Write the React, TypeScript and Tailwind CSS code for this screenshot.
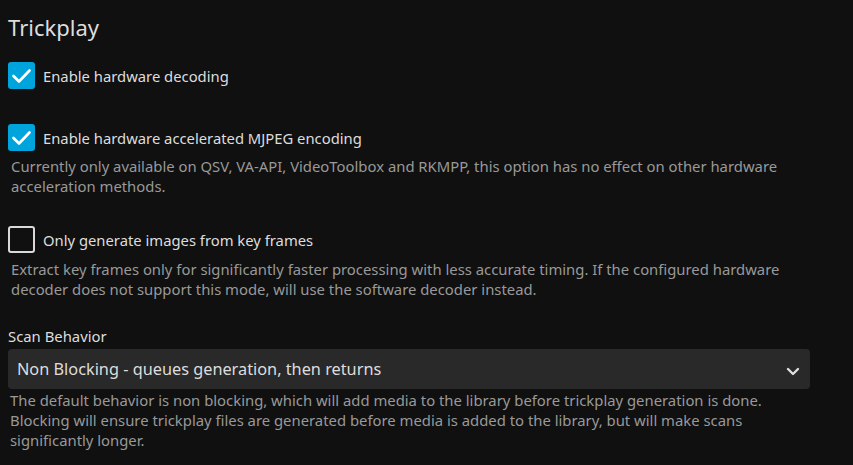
import { useState } from 'react';

function Check({ checked }: { checked: boolean }) {
  return checked ? (
    <span className="flex h-[27px] w-[27px] shrink-0 rounded-[3px] bg-[#00a4dc]">
      <svg viewBox="0 0 27 27" className="h-[27px] w-[27px]" fill="none" stroke="#fff" strokeWidth="2.7" strokeLinecap="round" strokeLinejoin="round">
        <path d="M5.5 14l5.5 5.5L21.5 8.5" />
      </svg>
    </span>
  ) : (
    <span className="h-[27px] w-[27px] shrink-0 rounded-[3px] border-2 border-[#d9d9d9]" />
  );
}

function CheckRow({ label, checked, desc, gap }: { label: string; checked: boolean; desc?: string; gap?: string }) {
  return (
    <div>
      <label className="flex items-center gap-[8px]">
        <Check checked={checked} />
        <span className="text-[14.8px] leading-[26px] text-[#dddddd]">{label}</span>
      </label>
      {desc && <p className={`${gap} pl-[3px] pr-[20px] text-[14.85px] leading-[20px] text-[#999999]`}>{desc}</p>}
    </div>
  );
}

export default function App() {
  const [mode] = useState('Non Blocking - queues generation, then returns');

  return (
    <div className="min-h-screen bg-[#101010] font-['Noto_Sans',sans-serif] text-[#dddddd]">
      <div className="w-[810px] pl-2 pt-3">
        <h2 className="text-[22px] leading-[30px] text-[#dddddd]">Trickplay</h2>

        <div className="mt-[20px]">
          <CheckRow label="Enable hardware decoding" checked />
        </div>

        <div className="mt-[35px]">
          <CheckRow
            label="Enable hardware accelerated MJPEG encoding"
            checked
            gap="mt-[5px]"
            desc="Currently only available on QSV, VA-API, VideoToolbox and RKMPP, this option has no effect on other hardware acceleration methods."
          />
        </div>

        <div className="mt-[30px]">
          <CheckRow
            label="Only generate images from key frames"
            checked={false}
            gap="mt-[6px]"
            desc="Extract key frames only for significantly faster processing with less accurate timing. If the configured hardware decoder does not support this mode, will use the software decoder instead."
          />
        </div>

        <div className="mt-[27px]">
          <div className="text-[14.85px] leading-[20px] text-[#dddddd]">Scan Behavior</div>
          <div className="mt-[3px] flex h-[40px] items-center justify-between rounded-[4px] bg-[#292929] pl-[9px] pr-[10px]">
            <span className="text-[16.3px] text-[#dddddd]">{mode}</span>
            <svg viewBox="0 0 14 9" className="mt-[4px] h-[9px] w-[14px]" fill="none" stroke="#dddddd" strokeWidth="2.4" strokeLinecap="round" strokeLinejoin="round">
              <path d="M2 2l5 5 5-5" />
            </svg>
          </div>
          <p className="mt-[1px] pl-[2px] pr-[10px] text-[14.85px] leading-[20px] text-[#999999]">
            The default behavior is non blocking, which will add media to the library before trickplay generation is done. Blocking will ensure trickplay files are generated before media is added to the library, but will make scans significantly longer.
          </p>
        </div>
      </div>
    </div>
  );
}
